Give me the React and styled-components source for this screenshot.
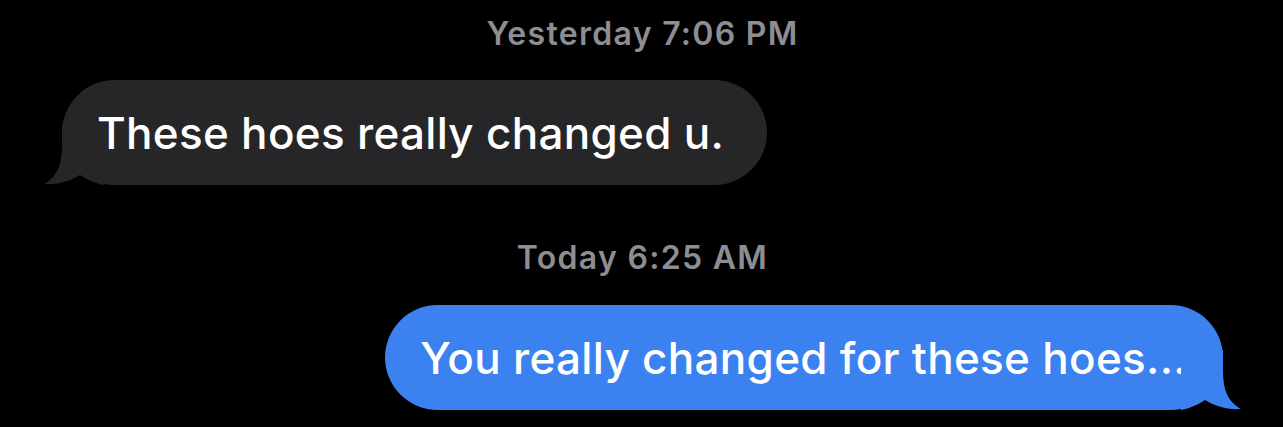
import React from 'react';
import styled, { createGlobalStyle } from 'styled-components';

const GlobalStyle = createGlobalStyle`
	html, body {
		margin: 0;
		background: #000;
	}
	body {
		font-family: Inter, "Noto Sans", sans-serif;
		-webkit-font-smoothing: antialiased;
	}
`;

const Thread = styled.div`
	display: flex;
	flex-direction: column;
	padding: 16px 60px 0 62px;
	height: 427px;
	box-sizing: border-box;
	background: #000;
`;

const Stamp = styled.div`
	text-align: center;
	color: #8d8d92;
	font-size: 32px;
	font-weight: 600;
	letter-spacing: 1.3px;
	line-height: 36px;
	margin: ${p => p.$top} 0 ${p => p.$bottom};
`;

const Row = styled.div`
	display: flex;
	justify-content: ${p => (p.$mine ? 'flex-end' : 'flex-start')};
`;

const Bubble = styled.div`
	position: relative;
	height: 105px;
	display: flex;
	align-items: center;
	padding: 0 ${p => p.$padR} 0 35px;
	border-radius: 53px;
	background: ${p => (p.$mine ? '#3b82f0' : '#262628')};
	color: #fff;
	font-size: 44px;
	font-weight: 500;
	letter-spacing: 0.3px;
	white-space: nowrap;
`;

const Tail = styled.svg`
	position: absolute;
	bottom: 0;
	${p => (p.$mine ? 'right: -18px; transform: scaleX(-1);' : 'left: -18px;')}
	width: 60px;
	height: 60px;
`;

const BubbleTail = ({ mine, color }) => (
	<Tail $mine={mine} viewBox="0 0 60 60">
		<path
			d="M18,0 L18,20 C18,42 12,52 0,59 C14,60 26,56 36,50 C42,54 50,58 60,60 L60,0 Z"
			fill={color}
		/>
	</Tail>
);

const Message = ({ mine, text, padR }) => (
	<Row $mine={mine}>
		<Bubble $mine={mine} $padR={padR}>
			{text}
			<BubbleTail mine={mine} color={mine ? '#3b82f0' : '#262628'} />
		</Bubble>
	</Row>
);

export default function App() {
	return (
		<Thread>
			<GlobalStyle />
			<Stamp $top="0" $bottom="28px">Yesterday 7:06 PM</Stamp>
			<Message text="These hoes really changed u." padR="43px" />
			<Stamp $top="55px" $bottom="29px">Today 6:25 AM</Stamp>
			<Message mine text="You really changed for these hoes..." padR="36px" />
		</Thread>
	);
}
